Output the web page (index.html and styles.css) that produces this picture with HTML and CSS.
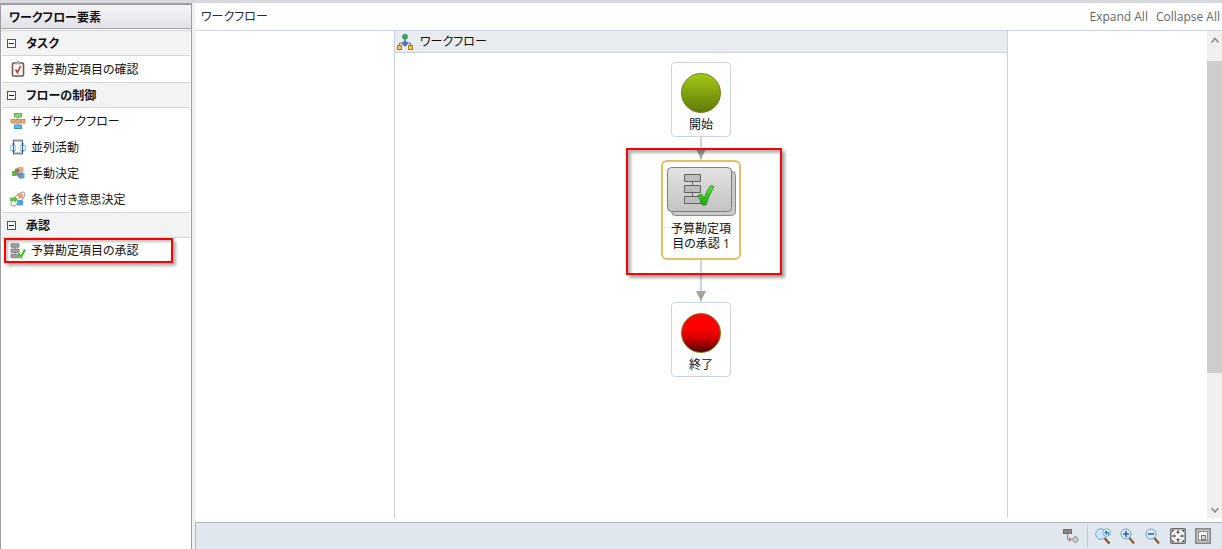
FILE: index.html
```html
<!DOCTYPE html>
<html lang="ja">
    <head>
        <title>ワークフロー</title>
        <meta charset="utf-8" />
        <meta name="viewport" content="width=device-width, initial-scale=1.0">
        <link rel="stylesheet" href="styles.css">
    </head>
    <body>
        <aside class="sidebar">
            <h2>ワークフロー要素</h2>
            <section>
                <button type="button" class="group"><span class="toggle"></span>タスク</button>
                <button type="button" class="element">
                    <svg class="icon" width="16" height="16" viewBox="0 0 16 16">
                        <rect x="2.5" y="2" width="11" height="13" rx="1" fill="#fff" stroke="#7a5547" stroke-width="1.6"/>
                        <path d="M5 3V1.500h1.500L7 .5h2l.5 1H11V3z" fill="#a9b3ba" stroke="#77828a" stroke-width=".5"/>
                        <path d="M5.500 8.500l2 3L10.500 5" fill="none" stroke="#c8322b" stroke-width="1.600"/>
                    </svg>
                    予算勘定項目の確認
                </button>
            </section>
            <section>
                <button type="button" class="group"><span class="toggle"></span>フローの制御</button>
                <button type="button" class="element">
                    <svg class="icon" width="16" height="16" viewBox="0 0 16 16">
                        <path d="M8 4v9M2 8h12" stroke="#9aa3a8"/>
                        <rect x="4.500" y=".5" width="7" height="3.500" fill="#8bdb6c" stroke="#5cae45"/>
                        <rect x="1" y="6.500" width="4" height="3.500" fill="#e8ab79" stroke="#cc8c5c"/>
                        <rect x="6" y="6.500" width="4" height="3.500" fill="#e8ab79" stroke="#cc8c5c"/>
                        <rect x="11" y="6.500" width="4" height="3.500" fill="#e8ab79" stroke="#cc8c5c"/>
                        <rect x="4.500" y="12" width="7" height="3.500" fill="#62b8ee" stroke="#3b97d3"/>
                    </svg>
                    サブワークフロー
                </button>
                <button type="button" class="element">
                    <svg class="icon" width="16" height="16" viewBox="0 0 16 16">
                        <rect x=".5" y="6.500" width="5" height="5" fill="#dcf1fb" stroke="#a5cde0"/>
                        <rect x="10.500" y="6.500" width="5" height="5" fill="#dcf1fb" stroke="#a5cde0"/>
                        <path d="M3 1.500h10M3 14.500h10" stroke="#8b909b" stroke-width="2"/>
                        <path d="M3.500 1v14M12.500 1v14" stroke="#4563b0"/>
                        <path d="M2 4.500h3L3.500 7zM11 4.500h3L12.500 7zM2 11.500h3L3.500 14zM11 11.500h3L12.500 14z" fill="#2a50b8"/>
                    </svg>
                    並列活動
                </button>
                <button type="button" class="element">
                    <svg class="icon" width="16" height="16" viewBox="0 0 16 16">
                        <rect x="7.500" y="2" width="6" height="5" rx="1" fill="#eba876"/>
                        <rect x="8.500" y="8" width="6" height="5.500" rx="1" fill="#4aa8e2"/>
                        <path d="M2 6h4.500v5H2z" fill="#55bd3c"/>
                        <circle cx="7" cy="5.500" r="2.300" fill="#94775f"/>
                        <path d="M5 8.500q3-2.500 5 0l2.500 4.500-2 .8L7 11z" fill="#87909a"/>
                        <path d="M7 7.500l2.500 2 2-2.500" fill="none" stroke="#7a828a" stroke-width="1.300"/>
                    </svg>
                    手動決定
                </button>
                <button type="button" class="element">
                    <svg class="icon" width="16" height="16" viewBox="0 0 16 16">
                        <rect x="8" y="2.500" width="5" height="5" rx="1" fill="#f0a269"/>
                        <rect x="7" y="9" width="6" height="5.500" rx="1" fill="#45a6e4"/>
                        <path d="M0 6.500h4.500V5L8 8.500 4.500 12v-2H0z" fill="#5ac83d"/>
                        <ellipse cx="8" cy="8" rx="9.200" ry="3.600" transform="rotate(-45 8 8)" fill="none" stroke="#8e9498" stroke-width=".9"/>
                    </svg>
                    条件付き意思決定
                </button>
            </section>
            <section>
                <button type="button" class="group"><span class="toggle"></span>承認</button>
                <button type="button" class="element marked">
                    <svg class="icon" width="16" height="16" viewBox="0 0 16 16">
                        <path d="M5 1v13" stroke="#777"/>
                        <path d="M1 .8h8v3.400H1zM1 6h8v3.400H1zM1 11.300h8v3.400H1z" fill="#a2a2a2" stroke="#737373" stroke-width=".8"/>
                        <path d="M8.500 10.500l2.500 3.500L15 6.500" fill="none" stroke="#3ec522" stroke-width="2.200"/>
                    </svg>
                    予算勘定項目の承認
                </button>
            </section>
        </aside>
        <main>
            <header>
                <h1>ワークフロー</h1>
                <a href="#">Expand All</a>
                <a href="#">Collapse All</a>
            </header>
            <div class="canvas">
                <div class="viewport">
                    <div class="frame">
                        <h2>
                            <svg width="16" height="16" viewBox="0 0 16 16">
                                <path d="M8 3v6M2.500 12V9h11v3" fill="none" stroke="#6e7785"/>
                                <circle cx="8" cy="2.800" r="2.500" fill="#35a867" stroke="#1f8049" stroke-width=".6"/>
                                <path d="M8 6.500L11 9.500 8 12.500 5 9.500z" fill="#5274c6" stroke="#34529c" stroke-width=".6"/>
                                <rect x=".5" y="11.500" width="4" height="4" fill="#f5c944" stroke="#a37c1c"/>
                                <rect x="11.500" y="11.500" width="4" height="4" fill="#f5c944" stroke="#a37c1c"/>
                            </svg>
                            ワークフロー
                        </h2>
                        <div class="flow">
                            <div class="node">
                                <span class="ball start"></span>
                                開始
                            </div>
                            <div class="connector"></div>
                            <div class="node task">
                                <svg width="70" height="50" viewBox="0 0 70 50">
                                    <defs>
                                        <linearGradient id="plate" x2="0" y2="1">
                                            <stop offset="0" stop-color="#e3e3e3"/>
                                            <stop offset="1" stop-color="#c3c3c3"/>
                                        </linearGradient>
                                        <linearGradient id="check" x2="0" y2="1">
                                            <stop offset="0" stop-color="#5fe23c"/>
                                            <stop offset="1" stop-color="#1fa514"/>
                                        </linearGradient>
                                    </defs>
                                    <rect x="5.500" y="4.500" width="64" height="44" rx="4" fill="#c9c9c9" stroke="#8a8a8a"/>
                                    <rect x="1.500" y=".5" width="64" height="44" rx="4" fill="url(#plate)" stroke="#7e7e7e"/>
                                    <path d="M26.500 14v5M26.500 25v5" stroke="#666"/>
                                    <path d="M18.500 7.500h16v7h-16zM18.500 18.500h16v7h-16zM18.500 29.500h16v7h-16z" fill="#bdbdbd" stroke="#606060"/>
                                    <path d="M32 28.500l3.500-1.500q2 2 2.500 4.500Q41 23 44.500 18.500l3.500 1Q43 28 40 38h-4Q34.500 33 32 28.500z" fill="url(#check)" stroke="#21951a" stroke-width=".8"/>
                                </svg>
                                <span>予算勘定項<br>目の承認 1</span>
                            </div>
                            <div class="connector long"></div>
                            <div class="node">
                                <span class="ball end"></span>
                                終了
                            </div>
                            <div class="highlight"></div>
                        </div>
                    </div>
                </div>
                <div class="scrollbar">
                    <svg width="15" height="30" viewBox="0 0 15 30">
                        <path d="M4.500 11.500l3.500-4 3.500 4" fill="none" stroke="#8a8a8a" stroke-width="1.500"/>
                    </svg>
                    <div class="thumb"></div>
                    <svg width="15" height="17" viewBox="0 0 15 17">
                        <path d="M4.500 7l3.500 4 3.500-4" fill="none" stroke="#8a8a8a" stroke-width="1.500"/>
                    </svg>
                </div>
            </div>
            <footer>
                <button type="button" aria-label="Auto arrange">
                    <svg width="16" height="16" viewBox="0 0 16 16">
                        <rect x=".5" y="1.500" width="8" height="4" fill="#8a8580" stroke="#716c68"/>
                        <path d="M4.500 6v5.500H9" fill="none" stroke="#8b8782"/>
                        <path d="M6 9l3 2.500L6 14z" fill="#c77d68"/>
                        <path d="M12.500 8l3.500 3.500-3.500 3.500L9 11.500z" fill="#c8c8c6" stroke="#8b8985"/>
                    </svg>
                </button>
                <span class="separator"></span>
                <button type="button" aria-label="Reset zoom">
                    <svg width="16" height="16" viewBox="0 0 16 16">
                        <path d="M9.500 10l5 5.500" stroke="#8c5b34" stroke-width="2.500"/>
                        <circle cx="6" cy="6" r="5.300" fill="#cfe6f8" stroke="#7da2be"/>
                        <circle cx="11.800" cy="4.500" r="3.800" fill="#f0f8ff" stroke="#8fa9bf"/>
                        <path d="M10 4.500h3.500V7M12 2.500l-2 2 2 2" fill="none" stroke="#2877c8" stroke-width="1.200"/>
                    </svg>
                </button>
                <button type="button" aria-label="Zoom in">
                    <svg width="16" height="16" viewBox="0 0 16 16">
                        <path d="M9 9.500l5 6" stroke="#8c5b34" stroke-width="2.200"/>
                        <circle cx="6" cy="6" r="5" fill="#dcedfb" stroke="#6e9ac6"/>
                        <path d="M3 6h6M6 3v6" stroke="#2460c4" stroke-width="1.600"/>
                    </svg>
                </button>
                <button type="button" aria-label="Zoom out">
                    <svg width="16" height="16" viewBox="0 0 16 16">
                        <path d="M9 9.500l5 6" stroke="#8c5b34" stroke-width="2.200"/>
                        <circle cx="6" cy="6" r="5" fill="#dcedfb" stroke="#6e9ac6"/>
                        <path d="M3 6h6" stroke="#2460c4" stroke-width="1.600"/>
                    </svg>
                </button>
                <button type="button" aria-label="Fit to window">
                    <svg width="16" height="16" viewBox="0 0 16 16">
                        <rect x=".8" y=".8" width="14.400" height="14.400" rx="1" fill="#f4f4f4" stroke="#6c6c6c" stroke-width="1.500"/>
                        <path d="M8 2v4M8 14v-4M2 8h4M14 8h-4" stroke="#777"/>
                        <path d="M6 5l2-3 2 3zM6 11l2 3 2-3zM5 6.500L2 8l3 1.500zM11 6.500L14 8l-3 1.500z" fill="#666"/>
                        <path d="M2 2h2.500L2 4.500zM14 2v2.500L11.500 2zM2 14v-2.500L4.500 14zM14 14h-2.500l2.500-2.500z" fill="#555"/>
                    </svg>
                </button>
                <button type="button" aria-label="Overview">
                    <svg width="16" height="16" viewBox="0 0 16 16">
                        <rect x=".8" y=".8" width="14.400" height="14.400" fill="#c9c9c9" stroke="#858585" stroke-width="1.500"/>
                        <rect x="3.500" y="3.500" width="9" height="9" fill="#f7f7f7" stroke="#8a8a8a"/>
                        <rect x="6.500" y="7.500" width="4" height="4" fill="#ddd" stroke="#777"/>
                    </svg>
                </button>
            </footer>
        </main>
    </body>
</html>
```
FILE: styles.css
```css
body {
    display: flex;
    box-sizing: border-box;
    height: 100vh;
    margin: 0;
    border-top: 3px solid #d8d9df;
    background: #f0f0f0;
    color: #111;
    font: 12px/15px "Open Sans", "Noto Sans CJK JP", sans-serif;
    font-feature-settings: "palt";
}

h1,
h2 {
    margin: 0;
    font-size: 12px;
    font-weight: normal;
}

button {
    border: 0 none;
    padding: 0;
    background: none;
    color: inherit;
    font: inherit;
    font-feature-settings: inherit;
    cursor: pointer;
}

svg {
    display: block;
    flex: none;
}

/* Sidebar */

.sidebar {
    flex: none;
    box-sizing: border-box;
    width: 192px;
    border: 1px solid #9d9da3;
    border-width: 2px 1px 0 1px;
    background: #fff;
}

.sidebar h2 {
    height: 23px;
    padding-left: 8px;
    border-bottom: 1px solid #a4a4ac;
    margin-bottom: 1px;
    background: linear-gradient(#f5f5f8, #e1e1e7);
    font-weight: bold;
    line-height: 25px;
}

.sidebar section {
    margin: 0 1px;
}

.group,
.element {
    display: flex;
    align-items: center;
    box-sizing: border-box;
    width: 100%;
    height: 26px;
}

.group {
    gap: 10px;
    padding-left: 5px;
    border: 1px solid #d3d5d8;
    border-width: 1px 0;
    background: #f2f4f4;
    font-weight: bold;
}

.toggle {
    box-sizing: border-box;
    width: 9px;
    height: 9px;
    border: 1px solid #555;
    background: linear-gradient(#222, #222) center / 5px 1px no-repeat #fff;
}

.element {
    gap: 5px;
    padding-left: 8px;
}

.marked {
    width: 169px;
    height: 25px;
    padding-left: 4px;
    border: 2px solid #f00;
    margin-left: 2px;
    box-shadow: 3px 3px 3px rgba(0,0,0,0.3), inset 2px 2px 3px rgba(0,0,0,0.25);
}

/* Editor */

main {
    display: flex;
    flex: 1;
    flex-direction: column;
    min-width: 0;
    margin-left: 3px;
    background: #fff;
}

header {
    display: flex;
    align-items: center;
    gap: 8px;
    height: 27px;
    padding: 0 2px 0 6px;
    border-bottom: 1px solid #cfd4e4;
}

header h1 {
    flex: 1;
    color: #222b3b;
}

header a {
    color: #666;
    text-decoration: none;
}

.canvas {
    display: flex;
    flex: 1;
    min-height: 0;
    margin-bottom: 4px;
}

.viewport {
    display: flex;
    flex: 1;
    justify-content: center;
    overflow: hidden;
}

.frame {
    box-sizing: border-box;
    width: 614px;
    border: 1px solid #ccd1e0;
    border-width: 0 1px;
}

.frame h2 {
    display: flex;
    align-items: center;
    gap: 7px;
    height: 21px;
    padding-left: 2px;
    border-bottom: 1px solid #ccd1e0;
    background: #e8ecef;
}

.flow {
    position: relative;
    display: flex;
    flex-direction: column;
    align-items: center;
    padding-top: 9px;
}

.node {
    display: flex;
    flex-direction: column;
    align-items: center;
    gap: 4px;
    box-sizing: border-box;
    width: 60px;
    height: 75px;
    padding-top: 10px;
    border: 1px solid #cfd4e4;
    border-radius: 4px;
    background: #fff;
}

.ball {
    box-sizing: border-box;
    width: 40px;
    height: 40px;
    border: 1px solid #76801c;
    border-radius: 50%;
}

.start {
    background: linear-gradient(#a3c915, #5f7a08);
}

.end {
    background: linear-gradient(#f00 40%, #d00000 65%, #500000);
}

.task {
    width: 80px;
    height: 100px;
    padding-top: 5px;
    border: 2px solid #e5c062;
    border-radius: 6px;
    text-align: center;
}

.connector {
    position: relative;
    width: 2px;
    height: 23px;
    background: #d0d3e2;
}

.connector.long {
    height: 42px;
}

.connector::after {
    content: "";
    position: absolute;
    bottom: 1px;
    left: -4px;
    border: 5px solid transparent;
    border-top: 10px solid #a2a2a2;
    border-bottom: 0;
}

.highlight {
    position: absolute;
    top: 95px;
    left: 50%;
    box-sizing: border-box;
    width: 156px;
    height: 127px;
    border: 2px solid #f00;
    margin-left: -75px;
    box-shadow: 3px 3px 3px rgba(0,0,0,0.35), inset 3px 3px 3px rgba(0,0,0,0.3);
}

.scrollbar {
    display: flex;
    flex-direction: column;
    width: 15px;
    background: #f0f0f0;
}

.scrollbar svg:last-child {
    margin-top: auto;
}

.thumb {
    height: 64%;
    background: #cdcdcd;
}

footer {
    display: flex;
    align-items: center;
    justify-content: flex-end;
    gap: 9px;
    height: 26px;
    padding-right: 11px;
    border-top: 1px solid #b3b5b8;
    border-left: 1px solid #b3b5b8;
    background: #e0e7ef;
}

.separator {
    width: 1px;
    height: 22px;
    margin: 0 -2px 0 -1px;
    background: #c5cad2;
}
```
